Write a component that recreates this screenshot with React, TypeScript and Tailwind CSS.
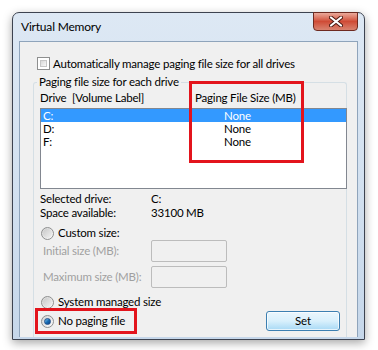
import React from "react";

function Checkbox() {
  return (
    <div className="w-[13px] h-[13px] border border-[#8e8f8f] bg-white p-[2px] shrink-0">
      <div className="w-full h-full border border-[#c6c6c6] bg-gradient-to-br from-[#d8d8d8] to-[#f7f7f7]" />
    </div>
  );
}

function Radio({ checked }: { checked?: boolean }) {
  return (
    <div className="w-[13px] h-[13px] rounded-full border border-[#8e8f8f] bg-gradient-to-br from-[#d4d4d4] to-[#fbfbfb] flex items-center justify-center shrink-0">
      {checked ? (
        <div className="w-[7px] h-[7px] rounded-full bg-gradient-to-br from-[#7fc7f0] via-[#1a6fb5] to-[#0e3f86] border border-[#1f4f8a]" />
      ) : (
        <div className="w-[9px] h-[9px] rounded-full bg-gradient-to-br from-[#c9c9c9] to-[#f2f2f2]" />
      )}
    </div>
  );
}

export default function App() {
  return (
    <div
      className="w-[378px] h-[350px] bg-white overflow-hidden pt-[12px] pl-[12px] text-[11.5px] leading-[14px] tracking-[-0.2px] text-black"
      style={{ fontFamily: "Lato, 'Liberation Sans', sans-serif" }}
    >
      <div className="relative w-[353px] h-[328px] rounded-t-[7px] border border-[#3d4350] bg-gradient-to-b from-[#dde8f4] via-[#d3e1f0] to-[#c6d7ea] shadow-[0_3px_10px_rgba(0,0,0,0.35)] flex flex-col px-[6px] pb-[2px]">
        <div className="h-[28px] flex items-center pl-[2px] text-[12px]">Virtual Memory</div>
        <div className="absolute top-[-1px] right-[6px] w-[45px] h-[19px] rounded-b-[4px] border border-[#6e2a20] bg-gradient-to-b from-[#e9a99b] via-[#cf4b36] to-[#d8826f] flex items-center justify-center">
          <svg width="14" height="11" viewBox="0 0 14 11">
            <path
              d="M2 1.5 L12 9.5 M12 1.5 L2 9.5"
              stroke="#4a1810"
              strokeWidth="4"
              strokeLinecap="round"
            />
            <path
              d="M2 1.5 L12 9.5 M12 1.5 L2 9.5"
              stroke="#ffffff"
              strokeWidth="2.2"
              strokeLinecap="round"
            />
          </svg>
        </div>
        <div className="flex-1 border border-b-0 border-[#8fa4bb] bg-[#f0f0f0] flex flex-col">
          <div className="mt-[15px] ml-[17px] h-[13px] flex items-center gap-[3px]">
            <Checkbox />
            <span>Automatically manage paging file size for all drives</span>
          </div>
          <div className="relative mt-[12px] ml-[13px] w-[314px] flex-1 border border-b-0 border-[#d5dfe5] rounded-t-[3px] pl-[6px] flex flex-col">
            <div className="absolute left-[3px] top-[-8px] px-[2px] bg-[#f0f0f0]">Paging file size for each drive</div>
            <div className="absolute left-[155px] top-[-2px] w-[115px] h-[82px] border-[3px] border-[#e3141c] z-10" />
            <div className="mt-[8px] h-[14px] flex">
              <span className="w-[155px]">Drive&nbsp;&nbsp;[Volume Label]</span>
              <span>Paging File Size (MB)</span>
            </div>
            <div className="mt-[3px] w-[307px] h-[81px] border border-[#828790] bg-white flex flex-col overflow-hidden">
              <div className="h-[13px] leading-[13px] bg-[#3399ff] text-white flex pl-[2px]">
                <span className="w-[181px]">C:</span>
                <span>None</span>
              </div>
              <div className="h-[13px] leading-[13px] flex pl-[2px]">
                <span className="w-[181px]">D:</span>
                <span>None</span>
              </div>
              <div className="h-[13px] leading-[13px] flex pl-[2px]">
                <span className="w-[181px]">F:</span>
                <span>None</span>
              </div>
            </div>
            <div className="mt-[3px] h-[14px] flex">
              <span className="w-[111px]">Selected drive:</span>
              <span>C:</span>
            </div>
            <div className="h-[14px] flex">
              <span className="w-[111px]">Space available:</span>
              <span>33100 MB</span>
            </div>
            <div className="mt-[6px] h-[14px] flex items-center gap-[4px] pl-[1px]">
              <Radio />
              <span>Custom size:</span>
            </div>
            <div className="h-[22px] flex items-center text-[#a0a0a0]">
              <span className="w-[111px] pl-[3px]">Initial size (MB):</span>
              <div className="w-[76px] h-[22px] border border-[#bcbcbc] rounded-[2px] bg-[#f0f0f0]" />
            </div>
            <div className="mt-[4px] h-[22px] flex items-center text-[#a0a0a0]">
              <span className="w-[111px] pl-[3px]">Maximum size (MB):</span>
              <div className="w-[76px] h-[22px] border border-[#bcbcbc] rounded-[2px] bg-[#f0f0f0]" />
            </div>
            <div className="mt-[7px] h-[14px] flex items-center gap-[4px] pl-[1px]">
              <Radio />
              <span>System managed size</span>
            </div>
            <div className="relative mt-[2px] h-[20px] flex items-center justify-between pr-[6px]">
              <div className="absolute left-[-5px] top-[-3px] w-[102px] h-[26px] border-[3px] border-[#e3141c]" />
              <div className="flex items-center gap-[4px] pl-[1px]">
                <Radio checked />
                <span>No paging file</span>
              </div>
              <div className="w-[74px] h-[20px] rounded-[3px] border border-[#3c7fb1] bg-gradient-to-b from-[#eaf6fd] via-[#d9f0fc] to-[#a7d9f5] flex items-center justify-center shadow-[inset_0_0_0_1px_rgba(255,255,255,0.7)]">
                Set
              </div>
            </div>
          </div>
        </div>
      </div>
    </div>
  );
}
